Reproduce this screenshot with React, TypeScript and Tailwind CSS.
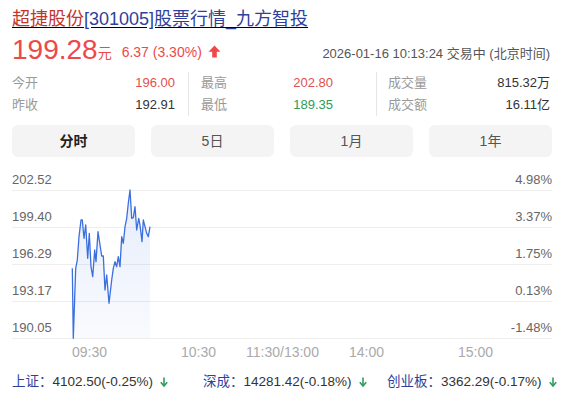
import React from "react";

const FONT = '"Liberation Sans", "Noto Sans CJK SC", sans-serif';

// 分时 points, chart-local coordinates (x from left grid edge, y from svg top)
const POINTS: [number, number][] = [
  [60.3, 98.3], [61.3, 168.3], [63.7, 98.3], [65.3, 90], [67, 66.7], [69, 50], [70.3, 50],
  [72, 68.3], [73.7, 55], [75.7, 88.3], [77.3, 63.3], [79, 96.7], [80.7, 106.7], [82.7, 80],
  [84, 91.7], [86, 61.7], [88, 75], [89.7, 86], [91.3, 86], [93, 120], [94.7, 105], [97, 133.3],
  [99.7, 110], [101.3, 98.3], [103, 91.7], [104.7, 96.7], [106.3, 86.7], [108, 96.7], [109.7, 66.7],
  [111.3, 73.3], [113, 56.7], [114.7, 48.3], [116.3, 33.3], [118, 20], [119.7, 48.3], [121.3, 47.7],
  [123, 36.7], [124.7, 60], [126.7, 48.3], [128, 55], [130, 71.7], [131.3, 50], [133, 56.7],
  [134.7, 63.3], [136.3, 66.7], [138, 56.7],
];

const GRID = [20, 57, 94, 131, 168];
const LEFT_LABELS = ["202.52", "199.40", "196.29", "193.17", "190.05"];
const RIGHT_LABELS = ["4.98%", "3.37%", "1.75%", "0.13%", "-1.48%"];
const TIMES: [string, number][] = [
  ["09:30", 60],
  ["10:30", 169],
  ["11:30/13:00", 234],
  ["14:00", 337],
  ["15:00", 446],
];

function UpArrow() {
  return (
    <svg width="13" height="13" viewBox="0 0 13 13" className="ml-[6px] mt-[2px]">
      <path d="M6.5 0.5 L12.5 6.8 L8.8 6.8 L8.8 12.5 L4.2 12.5 L4.2 6.8 L0.5 6.8 Z" fill="#ec4a4a" />
    </svg>
  );
}

function DownArrow() {
  return (
    <svg width="8" height="10" viewBox="0 0 8 10" className="ml-[7px] shrink-0">
      <path d="M4 0.5 L4 8.5" stroke="#2a9d5c" strokeWidth="1.6" />
      <path d="M0.8 5.2 L4 9 L7.2 5.2" stroke="#2a9d5c" strokeWidth="1.6" fill="none" />
    </svg>
  );
}

function Chart() {
  const line = POINTS.map(([x, y]) => `${x},${y}`).join(" ");
  const area = `${line} 138,168.3 60.3,168.3`;
  return (
    <svg width="540" height="195" viewBox="0 0 540 195" className="block" style={{ fontFamily: FONT }}>
      <defs>
        <linearGradient id="fill" x1="0" y1="0" x2="0" y2="1">
          <stop offset="0%" stopColor="#3b6fe0" stopOpacity="0.13" />
          <stop offset="100%" stopColor="#3b6fe0" stopOpacity="0.03" />
        </linearGradient>
      </defs>
      {GRID.map((y) => (
        <line key={y} x1="0" x2="540" y1={y + 0.5} y2={y + 0.5} stroke="#eeeeee" strokeWidth="1" />
      ))}
      {GRID.map((y, i) => (
        <text key={"l" + y} x="0" y={y - 6} fontSize="13" fill="#666">
          {LEFT_LABELS[i]}
        </text>
      ))}
      {GRID.map((y, i) => (
        <text key={"r" + y} x="540" y={y - 6} fontSize="13" fill="#666" textAnchor="end">
          {RIGHT_LABELS[i]}
        </text>
      ))}
      <polygon points={area} fill="url(#fill)" />
      <polyline points={line} fill="none" stroke="#3b6fe0" strokeWidth="1.3" strokeLinejoin="round" />
      {TIMES.map(([t, x]) => (
        <text key={t} x={x} y="187" fontSize="14" fill="#aaa">
          {t}
        </text>
      ))}
    </svg>
  );
}

function Stat({ label, value, color }: { label: string; value: string; color: string }) {
  return (
    <div className="flex h-[22px] items-center justify-between">
      <span className="text-[#999]">{label}</span>
      <span className={color}>{value}</span>
    </div>
  );
}

function Index({ name, value, className }: { name: string; value: string; className: string }) {
  return (
    <div className={`flex items-center shrink-0 whitespace-nowrap ${className}`}>
      <span className="text-[#2f3f9c]">{name}：</span>
      <span className="text-[#333]">{value}</span>
      <DownArrow />
    </div>
  );
}

export default function App() {
  const tabs = ["分时", "5日", "1月", "1年"];
  return (
    <div className="w-[567px] h-[396px] bg-white pl-3 pr-[15px] pt-[6px] overflow-hidden" style={{ fontFamily: FONT }}>
      {/* title */}
      <div className="text-[18px] leading-[26px] underline underline-offset-2">
        <span className="text-[#c4352c]">超捷股份</span>
        <span className="text-[#2f3f9c]">[301005]股票行情_九方智投</span>
      </div>

      {/* price */}
      <div className="flex items-center h-[38px] mt-[-1px]">
        <span className="text-[28px] leading-none text-[#ec4a4a]">199.28</span>
        <span className="text-[14px] text-[#ec4a4a] mt-[6px]">元</span>
        <span className="text-[14px] text-[#ec4a4a] ml-[10px] mt-[5px]">6.37 (3.30%)</span>
        <UpArrow />
        <span className="ml-auto text-[13px] text-[#555] mt-[8px] mr-[2px]">2026-01-16 10:13:24 交易中 (北京时间)</span>
      </div>

      {/* stats */}
      <div className="flex text-[13px] mt-[3px]">
        <div className="w-[176px] pr-[13px]">
          <Stat label="今开" value="196.00" color="text-[#e05050]" />
          <Stat label="昨收" value="192.91" color="text-[#333]" />
        </div>
        <div className="w-[188px] border-l border-[#e6e6e6] pl-3 pr-[43px]">
          <Stat label="最高" value="202.80" color="text-[#e05050]" />
          <Stat label="最低" value="189.35" color="text-[#2a9d5c]" />
        </div>
        <div className="w-[176px] border-l border-[#e6e6e6] pl-[11px] pr-[2px]">
          <Stat label="成交量" value="815.32万" color="text-[#333]" />
          <Stat label="成交额" value="16.11亿" color="text-[#333]" />
        </div>
      </div>

      {/* tabs */}
      <div className="grid grid-cols-4 gap-4 mt-[9px]">
        {tabs.map((t, i) => (
          <div
            key={t}
            className={`h-[32px] rounded-md bg-[#f4f4f4] flex items-center justify-center text-[14px] ${
              i === 0 ? "font-bold text-[#222]" : "text-[#555]"
            }`}
          >
            {t}
          </div>
        ))}
      </div>

      {/* chart */}
      <div className="mt-[13px]">
        <Chart />
      </div>

      {/* indices */}
      <div className="flex text-[13.5px] mt-[7px]">
        <Index name="上证" value="4102.50(-0.25%)" className="w-[191px]" />
        <Index name="深成" value="14281.42(-0.18%)" className="w-[184px]" />
        <Index name="创业板" value="3362.29(-0.17%)" className="" />
      </div>
    </div>
  );
}
